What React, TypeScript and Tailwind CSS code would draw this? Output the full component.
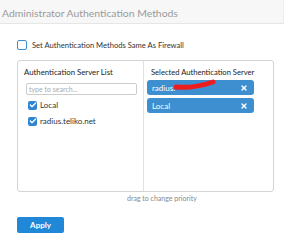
import { X, Check } from "lucide-react";

export default function App() {
  const available = ["Local", "radius.teliko.net"];
  const selected = [
    { name: "radius.", hidden: true },
    { name: "Local", hidden: false },
  ];

  return (
    <div
      className="w-[285px] h-[240px] bg-white text-[#333] overflow-hidden"
      style={{ fontFamily: "Lato, 'Noto Sans', sans-serif" }}
    >
      <div className="h-[24px] bg-[#f7f7f7] border-b border-[#e6e6e6] border-r border-r-[#eee] w-[284px] pl-[2px] pt-[6px] text-[10.4px] leading-[14px] text-[#9a9a9a]">
        Administrator Authentication Methods
      </div>

      <div className="pl-[17px] pt-[16px] flex items-center gap-[5px]">
        <div className="w-[10px] h-[10px] rounded-[2px] border border-[#3a8fd6] bg-white" />
        <span className="text-[7.6px] leading-[10px]">Set Authentication Methods Same As Firewall</span>
      </div>

      <div className="ml-[17px] mt-[10px] w-[257px] h-[132px] border border-[#d4d4d4] rounded-[3px] flex">
        <div className="w-[126px] border-r border-[#e2e2e2] pl-[6px] pt-[6px]">
          <div className="text-[7.8px] leading-[10px] text-[#222]">Authentication Server List</div>
          <div className="mt-[6px] ml-[2px] w-[111px] h-[12px] border border-[#ccc] rounded-[2px] text-[7px] leading-[10px] text-[#aaa] pl-[2px]">
            type to search...
          </div>
          <div className="mt-[5px] flex flex-col gap-[6px] pl-[4px]">
            {available.map((s) => (
              <div key={s} className="flex items-center gap-[3px]">
                <div className="w-[9px] h-[9px] rounded-[2px] bg-[#2f86d0] flex items-center justify-center">
                  <Check size={8} strokeWidth={4} color="white" />
                </div>
                <span className="text-[8px] leading-[10px]">{s}</span>
              </div>
            ))}
          </div>
        </div>
        <div className="flex-1 pl-[3px] pt-[6px]">
          <div className="text-[7.6px] leading-[10px] text-[#222] pl-[4px]">Selected Authentication Server</div>
          <div className="mt-[3px] flex flex-col gap-[3px]">
            {selected.map((s) => (
              <div
                key={s.name}
                className="w-[107px] h-[15px] rounded-[3px] bg-[#3e8fcf] flex items-center justify-between pl-[5px] pr-[6px] text-white text-[8px]"
              >
                <span className="relative">
                  {s.name}
                  {s.hidden && (
                    <svg className="absolute left-[22px] top-[-3px]" width="42" height="13" viewBox="0 0 42 13">
                      <path
                        d="M2 8 C12 9 24 8 39 3"
                        stroke="#ee1c1c"
                        strokeWidth="5"
                        strokeLinecap="round"
                        fill="none"
                      />
                    </svg>
                  )}
                </span>
                <X size={8} strokeWidth={4} color="white" />
              </div>
            ))}
          </div>
        </div>
      </div>

      <div className="pl-[127px] pt-[1px] text-[7px] leading-[10px] text-[#888]">drag to change priority</div>

      <button className="ml-[17px] mt-[14px] w-[47px] h-[16px] rounded-[2px] bg-[#2188d8] text-white text-[8px] font-bold">
        Apply
      </button>
    </div>
  );
}
